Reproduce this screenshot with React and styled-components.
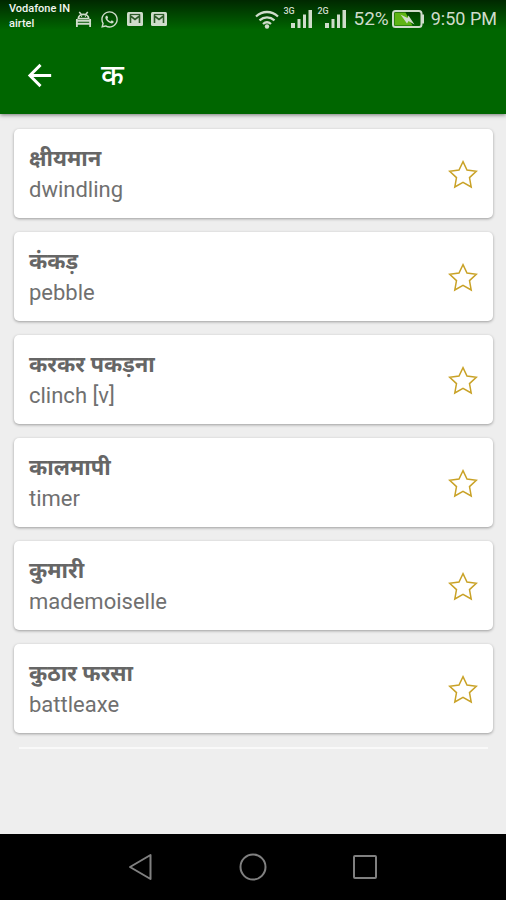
import { useState } from "react";
import styled, { createGlobalStyle } from "styled-components";
import { FaWhatsapp } from "react-icons/fa";
import { MdArrowBack } from "react-icons/md";

const words = [
  { id: 1, hindi: "क्षीयमान", english: "dwindling" },
  { id: 2, hindi: "कंकड़", english: "pebble" },
  { id: 3, hindi: "करकर पकड़ना", english: "clinch [v]" },
  { id: 4, hindi: "कालमापी", english: "timer" },
  { id: 5, hindi: "कुमारी", english: "mademoiselle" },
  { id: 6, hindi: "कुठार फरसा", english: "battleaxe" },
];

function DebugIcon() {
  return (
    <svg width="17" height="17" viewBox="0 0 18 18" fill="none" stroke="currentColor">
      <path d="M4.500 1l2 2.500M13.500 1l-2 2.500" strokeWidth="1.600" />
      <path d="M3.500 8c0-6 11-6 11 0z" strokeWidth="1.800" />
      <path d="M6.500 5.500h1M10.500 5.500h1" strokeWidth="1.500" />
      <path d="M1 10.500h16M1 13.500h16" strokeWidth="1.900" />
      <path d="M2 8.500v8.500M16 8.500v8.500" strokeWidth="1.900" />
    </svg>
  );
}

function MailIcon() {
  return (
    <svg width="16" height="14" viewBox="0 0 16 14">
      <rect width="16" height="14" rx="1.500" fill="currentColor" />
      <path d="M3.500 11V4l4.500 3.500L12.500 4v7" fill="none" stroke="#2c5a28" strokeWidth="1.600" />
      <path d="M3 2.500h10" stroke="#2c5a28" strokeWidth="1.200" />
    </svg>
  );
}

function WifiIcon() {
  return (
    <svg width="24" height="19" viewBox="0 0 24 19" fill="none" stroke="currentColor" strokeWidth="2.300">
      <path d="M1 6.500c6.500-6 15.500-6 22 0M4.500 10.300c4.500-4 10.500-4 15 0M8 14c2.500-2.200 5.500-2.200 8 0" />
      <circle cx="12" cy="16.500" r="2.200" fill="currentColor" stroke="none" />
    </svg>
  );
}

function SignalIcon({ label }) {
  return (
    <Signal>
      <span>{label}</span>
      <svg width="22" height="18" viewBox="0 0 22 18" fill="currentColor">
        <path d="M0 13h4v5H0zM6.500 9h3v9h-3zM12 4.500h3V18h-3zM17.500 0H21v18h-3.500z" />
      </svg>
    </Signal>
  );
}

function BatteryIcon() {
  return (
    <svg width="33" height="18" viewBox="0 0 33 18">
      <rect x="1" y="1" width="28.500" height="16" rx="2.500" fill="none" stroke="currentColor" strokeWidth="2" />
      <path d="M30 4.500h2v9h-2z" fill="currentColor" />
      <path d="M2.500 2.500h11l7 13h-18z" fill="#5fb414" />
      <path d="M8.500 4.500l7 3.500 1-2.500 6 9-6-3.500-1.500 2.500z" fill="currentColor" />
    </svg>
  );
}

function StarIcon({ filled }) {
  return (
    <svg width="30" height="30" viewBox="0 0 30 30">
      <path
        d="M15 1.700L19 10l9.300 1.200-6.800 6.400 1.700 9.400-8.200-4.700L6.800 27l1.700-9.400-6.800-6.400L11 10z"
        fill={filled ? "#c9a227" : "none"}
        stroke="#c9a227"
        strokeWidth="1.500"
      />
    </svg>
  );
}

function WordCard({ hindi, english }) {
  const [saved, setSaved] = useState(false);

  return (
    <Card>
      <div>
        <Hindi lang="hi">{hindi}</Hindi>
        <English>{english}</English>
      </div>
      <StarButton
        type="button"
        aria-label={`Favourite ${english}`}
        aria-pressed={saved}
        onClick={() => setSaved(!saved)}
      >
        <StarIcon filled={saved} />
      </StarButton>
    </Card>
  );
}

export default function App() {
  return (
    <>
      <GlobalStyle />
      <Screen>
        <Header>
          <StatusBar>
            <Carrier>
              Vodafone IN
              <br />
              airtel
            </Carrier>
            <Notifications>
              <DebugIcon />
              <FaWhatsapp size={19} />
              <MailIcon />
              <MailIcon />
            </Notifications>
            <SystemIcons>
              <WifiIcon />
              <SignalIcon label="3G" />
              <SignalIcon label="2G" />
              <Battery>
                52%
                <BatteryIcon />
              </Battery>
              <Clock>9:50 PM</Clock>
            </SystemIcons>
          </StatusBar>
          <Toolbar>
            <BackButton type="button" aria-label="Back">
              <MdArrowBack size={35} />
            </BackButton>
            <h1 lang="hi">क</h1>
          </Toolbar>
        </Header>
        <WordList>
          {words.map((w) => (
            <WordCard key={w.id} hindi={w.hindi} english={w.english} />
          ))}
          <NextCardEdge />
        </WordList>
        <NavBar>
          <NavButton type="button" aria-label="Back">
            <svg width="28" height="28" viewBox="0 0 28 28">
              <path d="M3 14L23.500 2v24z" />
            </svg>
          </NavButton>
          <NavButton type="button" aria-label="Home">
            <svg width="28" height="28" viewBox="0 0 28 28">
              <circle cx="14" cy="14" r="12.500" />
            </svg>
          </NavButton>
          <NavButton type="button" aria-label="Recent apps">
            <svg width="28" height="28" viewBox="0 0 28 28">
              <rect x="3" y="3" width="22" height="22" rx="1" />
            </svg>
          </NavButton>
        </NavBar>
      </Screen>
    </>
  );
}

const GlobalStyle = createGlobalStyle`
  * {
    box-sizing: border-box;
  }
  body {
    margin: 0;
    background: #eeeeee;
    font-family: Roboto, "Noto Sans", sans-serif;
  }
  h1, h2, p, ul {
    margin: 0;
    padding: 0;
  }
  button {
    display: flex;
    align-items: center;
    justify-content: center;
    padding: 0;
    border: none;
    background: none;
    cursor: pointer;
  }
  svg {
    flex-shrink: 0;
  }
`;

const Screen = styled.div`
  min-height: 100vh;
  display: flex;
  flex-direction: column;
`;

const Header = styled.header`
  background: linear-gradient(#002800 0, #006600 30px);
  box-shadow: 0 1px 4px rgba(0, 0, 0, 0.5);
`;

const StatusBar = styled.div`
  height: 38px;
  padding: 0 9px;
  display: flex;
  align-items: center;
  color: #cfdccb;
`;

const Carrier = styled.p`
  align-self: flex-start;
  padding-top: 1px;
  color: #f2f5f0;
  font-size: 11px;
  line-height: 15px;
  font-weight: 500;
  white-space: nowrap;
`;

const Notifications = styled.div`
  margin-left: 5px;
  display: flex;
  align-items: center;
  gap: 8px;
`;

const SystemIcons = styled.div`
  margin-left: auto;
  display: flex;
  align-items: center;
  gap: 6px;
  font-size: 19px;
  line-height: 24px;
  white-space: nowrap;
`;

const Signal = styled.div`
  position: relative;
  padding-left: 6px;
  display: flex;

  span {
    position: absolute;
    left: -2px;
    top: -4px;
    font-size: 9px;
    line-height: 10px;
    font-weight: 500;
  }
`;

const Battery = styled.div`
  display: flex;
  align-items: center;
  gap: 3px;
`;

const Clock = styled.span`
  font-size: 18px;
`;

const Toolbar = styled.div`
  height: 76px;
  padding: 0 22px 2px;
  display: flex;
  align-items: center;
  gap: 44px;
  color: white;

  h1 {
    font-size: 29px;
    line-height: 40px;
    font-weight: 500;
  }
`;

const BackButton = styled.button`
  color: white;
`;

const WordList = styled.ul`
  flex: 1;
  padding: 15px 13px 0 14px;
  display: flex;
  flex-direction: column;
  gap: 14px;
  list-style: none;
`;

const Card = styled.li`
  height: 89px;
  padding: 2px 15px 0;
  display: flex;
  align-items: center;
  justify-content: space-between;
  background: white;
  border-radius: 5px;
  box-shadow: 0 1px 3px rgba(0, 0, 0, 0.35);
`;

const Hindi = styled.h2`
  color: #666666;
  font-size: 22px;
  line-height: 30px;
  font-weight: 700;
`;

const English = styled.p`
  color: #707070;
  font-size: 22px;
  line-height: 32px;
`;

const StarButton = styled.button`
  width: 30px;
  height: 30px;
`;

const NextCardEdge = styled.li`
  height: 2px;
  margin: 0 5px;
  background: #f9f9f9;
`;

const NavBar = styled.nav`
  height: 66px;
  display: flex;
  align-items: center;
  justify-content: center;
  gap: 84px;
  background: black;
`;

const NavButton = styled.button`
  svg {
    fill: none;
    stroke: #808080;
    stroke-width: 2;
    stroke-linejoin: round;
  }
`;
